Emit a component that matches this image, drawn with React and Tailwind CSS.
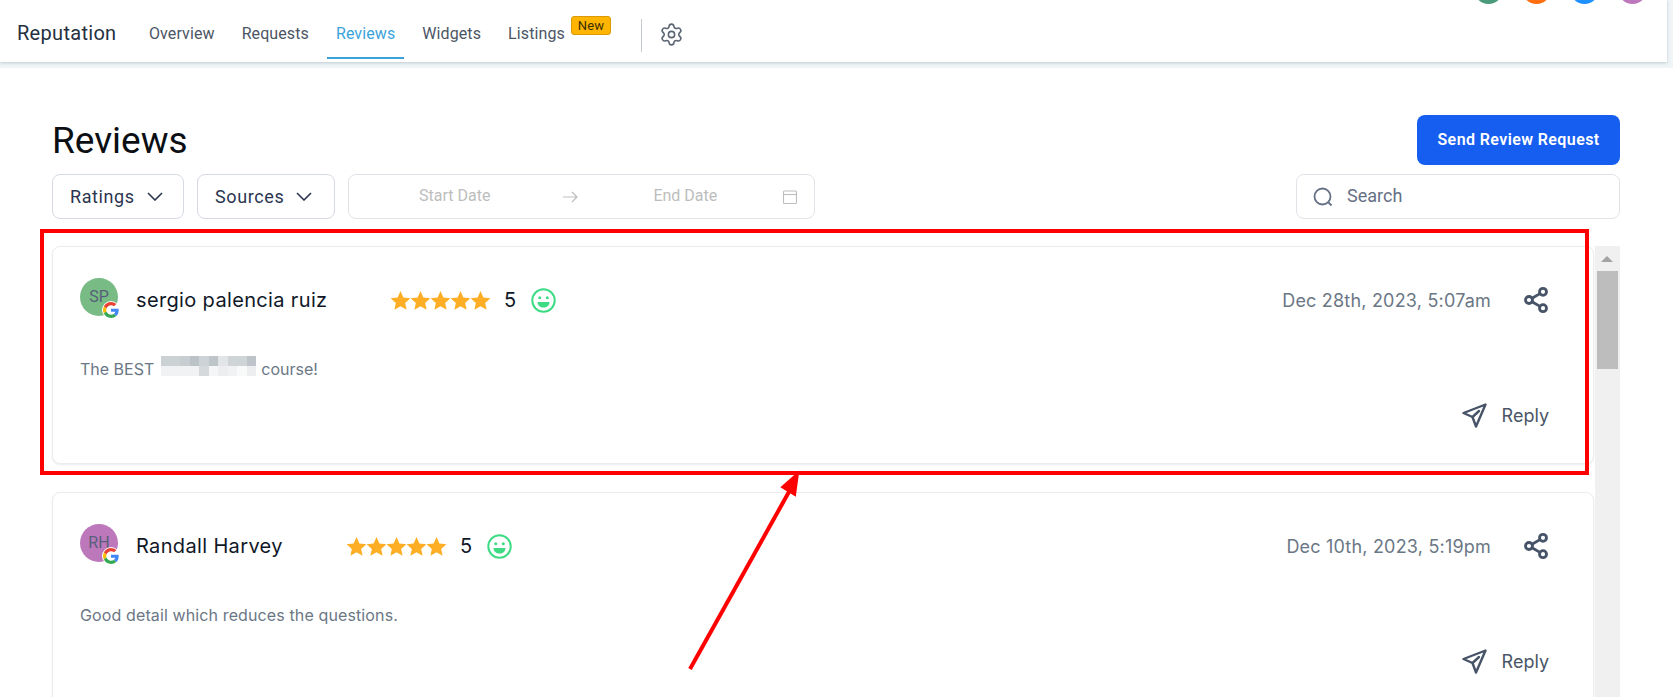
import React from 'react';
import { Settings, Share2 } from 'lucide-react';

const inter = "font-['Inter',sans-serif]";
const navItems = ['Overview', 'Requests', 'Reviews', 'Widgets', 'Listings'];
const blurBlocks = [
  '#ccd1d4', '#ccd1d4', '#c8cdd1', '#bcc3c7', '#ced3d7', '#bec5c9', '#e2e5e7', '#cfd4d7', '#cfd4d7', '#bec4c9',
  '#f0f2f3', '#f0f2f3', '#f0f2f3', '#f0f2f3', '#d5d9dc', '#f5f6f7', '#eceef0', '#f1f2f3', '#f8f9f9', '#eceef0',
];

const Star = () => (
  <svg viewBox="0 0 24 24" className="h-[21px] w-[21px] -mx-[0.5px]" fill="#fdae24">
    <path d="M12 1.2l3.3 7.4 8 .8-6 5.4 1.7 7.9-7-4.1-7 4.1 1.7-7.9-6-5.4 8-.8z" />
  </svg>
);

const Smile = () => (
  <svg viewBox="0 0 25 25" className="h-[25px] w-[25px]" fill="none">
    <circle cx="12.5" cy="12.5" r="11.2" stroke="#3ddc84" strokeWidth="2" />
    <circle cx="8.7" cy="9.8" r="1.5" fill="#3ddc84" />
    <circle cx="16.3" cy="9.8" r="1.5" fill="#3ddc84" />
    <path d="M6.5 14h12c0 3.4-2.6 5.6-6 5.6s-6-2.2-6-5.6z" fill="#3ddc84" />
  </svg>
);

const GoogleBadge = () => (
  <span className="absolute -right-[2px] -bottom-[3px] flex h-[18px] w-[18px] items-center justify-center rounded-full bg-white">
    <svg viewBox="0 0 48 48" className="h-[16px] w-[16px]">
      <path fill="#EA4335" d="M24 9.5c3.5 0 6.7 1.2 9.2 3.6l6.9-6.9C35.9 2.4 30.5 0 24 0 14.6 0 6.5 5.4 2.6 13.2l8 6.2C12.5 13.7 17.800 9.500 24 9.500z" />
      <path fill="#4285F4" d="M47 24.500c0-1.600-.1-3.100-.4-4.500H24v9h12.900c-.6 3-2.200 5.500-4.700 7.200l7.700 6c4.500-4.200 7.100-10.300 7.100-17.700z" />
      <path fill="#FBBC05" d="M10.500 28.600c-.5-1.400-.8-3-.8-4.600s.3-3.200.8-4.600l-8-6.200C.9 16.500 0 20.100 0 24s.9 7.500 2.600 10.800l7.900-6.200z" />
      <path fill="#34A853" d="M24 48c6.500 0 11.900-2.100 15.900-5.800l-7.700-6c-2.200 1.500-4.900 2.300-8.200 2.300-6.200 0-11.500-4.200-13.400-9.900l-8 6.200C6.500 42.600 14.600 48 24 48z" />
    </svg>
  </span>
);

const PlaneIcon = () => (
  <svg viewBox="0 0 25 25" className="h-[25px] w-[25px]" fill="none" stroke="#475467" strokeWidth="2.4" strokeLinejoin="round" strokeLinecap="round">
    <path d="M23.500 1.500L1.500 10l9 4 3.500 9.500z" />
    <path d="M10.500 14l6.500-6" />
  </svg>
);

const Chevron = () => (
  <svg viewBox="0 0 16 9" className="h-[9px] w-[16px]" fill="none" stroke="#2b3550" strokeWidth="1.6">
    <path d="M1 1l7 7 7-7" />
  </svg>
);

const ReviewCard = ({ initials, color, name, nameWidth, date, children, className }) => (
  <div className={`flex flex-col rounded-lg border border-[#eaecf0] bg-white pl-[27px] pr-[43px] shadow-[0_1px_2px_rgba(16,24,40,0.08)] ${inter} ${className}`}>
    <div className="flex items-center pt-[37px]">
      <div className={`relative -mt-[6px] flex h-[38px] w-[38px] shrink-0 items-center justify-center rounded-full ${color}`}>
        <span className="text-[16px] font-['Roboto',sans-serif] text-[#56607a]">{initials}</span>
        <GoogleBadge />
      </div>
      <span className={`ml-[18px] text-[20px] tracking-[0.35px] text-[#101828] ${nameWidth}`}>{name}</span>
      <div className="flex items-center">
        <Star /><Star /><Star /><Star /><Star />
      </div>
      <span className="ml-[14px] text-[20px] text-[#101828]">5</span>
      <span className="ml-[15px]"><Smile /></span>
      <span className="ml-auto text-[18px] tracking-[0.2px] text-[#6b7785]">{date}</span>
      <Share2 className="ml-[31px] h-[28px] w-[28px] text-[#475467]" strokeWidth={2.4} />
    </div>
    <div className="mt-[41px] flex h-[24px] items-center text-[16px] text-[#6b7785]">{children}</div>
    <div className="mt-[21px] flex items-center justify-end gap-[15px] pr-[1px]">
      <PlaneIcon />
      <span className="text-[18px] text-[#4a5568]">Reply</span>
    </div>
  </div>
);

export default function App() {
  return (
    <div className="relative h-[697px] w-full overflow-hidden bg-white font-['Roboto',sans-serif]">
      {/* Top nav */}
      <div className="bg-[#f0f5f7] pb-[6px] pr-[6px]">
        <header className="relative flex h-[62px] items-center bg-white pl-[17px] shadow-[0_1px_3px_rgba(100,120,140,0.35)]">
          <span className="mt-[3px] text-[20px] tracking-[0.3px] text-[#253040]">Reputation</span>
          <nav className="ml-[19px] flex h-full items-center">
            {navItems.map((item) => (
              <div key={item} className={`relative mx-[4.5px] flex h-full items-center px-[9px] pt-[5px] text-[16px] tracking-[0.1px] ${item === 'Reviews' ? 'text-[#3ba3dc]' : 'text-[#4b5565]'}`}>
                <span>{item}</span>
                {item === 'Reviews' && <span className="absolute bottom-[3px] left-0 h-[2px] w-full bg-[#3ba3dc]" />}
                {item === 'Listings' && (
                  <span className="absolute left-[calc(100%-3px)] top-[16px] rounded-[3px] border border-[#d89a05] bg-[#ffb400] px-[6px] text-[13px] leading-[17px] text-[#3a3000]">New</span>
                )}
              </div>
            ))}
          </nav>
          <div className="ml-[63px] mt-[8px] h-[33px] w-[1px] bg-[#c4c9d0]" />
          <Settings className="ml-[17px] mt-[6px] h-[25px] w-[25px] text-[#5b6472]" strokeWidth={1.5} />
          <div className="absolute -top-[25px] right-[20px] flex gap-[19px]">
            <span className="h-[29px] w-[29px] rounded-full bg-[#4b9a7c]" />
            <span className="h-[29px] w-[29px] rounded-full bg-[#ff6e0f]" />
            <span className="h-[29px] w-[29px] rounded-full bg-[#1e90ff]" />
            <span className="h-[29px] w-[29px] rounded-full bg-[#bc78bb]" />
          </div>
        </header>
      </div>

      {/* Page */}
      <main className="pl-[52px] pr-[53px] pt-[47px]">
        <div className="flex items-center justify-between">
          <h1 className="pt-[2px] text-[37px] leading-[48px] text-[#0b0f14]">Reviews</h1>
          <button className="flex h-[50px] w-[203px] items-center justify-center rounded-lg bg-[#155eef] text-[16px] font-semibold tracking-[0.4px] text-white">Send Review Request</button>
        </div>

        <div className="mt-[9px] flex gap-[13px] text-[#2b3550]">
          <div className="flex h-[45px] w-[132px] items-center gap-[12px] rounded-lg border border-[#d5d9e2] pl-[17px] text-[18px] tracking-[0.6px]">
            Ratings <Chevron />
          </div>
          <div className="flex h-[45px] w-[138px] items-center gap-[12px] rounded-lg border border-[#d5d9e2] pl-[17px] text-[18px] tracking-[0.6px]">
            Sources <Chevron />
          </div>
          <div className="flex h-[45px] w-[467px] items-center rounded-lg border border-[#e0e3e8] pl-[70px] pr-[16px] text-[16px] text-[#bdbdbd]">
            <span className="pb-[2px]">Start Date</span>
            <svg viewBox="0 0 16 16" className="ml-[72px] h-[16px] w-[16px]" fill="none" stroke="#bdbdbd" strokeWidth="1.2">
              <path d="M1 8h14M10 3l5 5-5 5" />
            </svg>
            <span className="ml-[75px] pb-[2px]">End Date</span>
            <svg viewBox="0 0 16 16" className="ml-auto h-[16px] w-[16px]" fill="none" stroke="#bdbdbd" strokeWidth="1.1">
              <rect x="1.500" y="2" width="13" height="12.500" rx="1" />
              <path d="M1.500 5.500h13" />
            </svg>
          </div>
          <div className="ml-auto flex h-[45px] w-[324px] items-center rounded-lg border border-[#e0e3e8] pl-[16px] text-[18px] text-[#667085]">
            <svg viewBox="0 0 20 20" className="h-[20px] w-[20px]" fill="none" stroke="#667085" strokeWidth="1.8">
              <circle cx="9.500" cy="9.500" r="8" />
              <path d="M15.500 15.500l3 3" />
            </svg>
            <span className="ml-[14px] pb-[3px]">Search</span>
          </div>
        </div>

        {/* List + scrollbar */}
        <div className="mt-[27px] flex">
          <div className="flex min-w-0 flex-1 flex-col gap-[28px]">
            <ReviewCard initials="SP" color="bg-[#78bb84]" name="sergio palencia ruiz" nameWidth="w-[254px]" date="Dec 28th, 2023, 5:07am" className="h-[218px]">
              <span>The BEST</span>
              <span className="relative ml-[7px] mr-[5px] h-[20px] w-[95px] self-start">
                <span className="absolute left-0 -top-[1px] grid w-[95px] grid-cols-10">
                  {blurBlocks.map((c, i) => (
                    <span key={i} className="h-[10px]" style={{ background: c }} />
                  ))}
                </span>
              </span>
              <span>course!</span>
            </ReviewCard>
            <ReviewCard initials="RH" color="bg-[#bc78bb]" name="Randall Harvey" nameWidth="w-[210px]" date="Dec 10th, 2023, 5:19pm" className="h-[240px]">
              <span className="tracking-[0.12px]">Good detail which reduces the questions.</span>
            </ReviewCard>
          </div>
          <div className="relative ml-[1px] w-[25px] shrink-0 bg-[#f0f0f0]">
            <span className="absolute left-[6px] top-[10px] h-0 w-0 border-x-[6px] border-b-[6px] border-x-transparent border-b-[#a3a3a3]" />
            <span className="absolute left-[2px] top-[25px] h-[98px] w-[21px] bg-[#bdbdbd]" />
          </div>
        </div>
      </main>

      {/* Red annotation over the screenshot */}
      <div className="pointer-events-none absolute left-[40px] top-[229px] h-[246px] w-[1549px] border-4 border-[#ff0000]" />
      <svg className="pointer-events-none absolute left-0 top-0 h-[697px] w-[1673px]" viewBox="0 0 1673 697" fill="none">
        <path d="M690 669L790 490" stroke="#ff0000" strokeWidth="4" />
        <path d="M798 473L782 487L795 495Z" fill="#ff0000" stroke="#ff0000" strokeWidth="2" />
      </svg>
    </div>
  );
}
